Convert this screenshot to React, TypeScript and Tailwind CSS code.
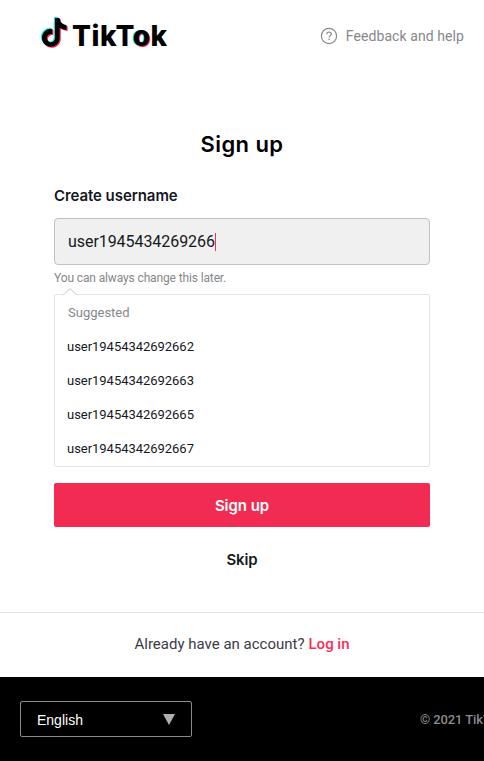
const NOTE =
  "M12.525.02c1.31-.02 2.61-.01 3.91-.02.08 1.53.63 3.09 1.75 4.17 1.12 1.11 2.7 1.62 4.24 1.79v4.03c-1.44-.05-2.89-.35-4.2-.97-.57-.26-1.1-.59-1.62-.93-.01 2.92.01 5.84-.02 8.75-.08 1.4-.54 2.79-1.35 3.94-1.31 1.92-3.58 3.17-5.91 3.21-1.43.08-2.86-.31-4.08-1.03-2.02-1.19-3.44-3.37-3.65-5.71-.02-.5-.03-1-.01-1.49.18-1.9 1.12-3.72 2.58-4.96 1.66-1.44 3.98-2.13 6.15-1.72.02 1.48-.04 2.96-.04 4.44-.99-.32-2.15-.23-3.02.37-.63.41-1.11 1.04-1.36 1.75-.21.51-.15 1.07-.14 1.61.24 1.64 1.82 3.02 3.5 2.87 1.12-.01 2.19-.66 2.77-1.61.19-.33.4-.67.41-1.06.1-1.79.06-3.57.07-5.36.01-4.03-.01-8.05.02-12.07z";

const suggestions = [
  "user19454342692662",
  "user19454342692663",
  "user19454342692665",
  "user19454342692667",
];

function Logo() {
  return (
    <div className="flex items-start">
      <svg width="28" height="32" viewBox="0 0 28 32">
        <path d={NOTE} fill="#25f4ee" transform="translate(-1 1.1) scale(1.18 1.2)" />
        <path d={NOTE} fill="#fe2c55" transform="translate(1.2 3) scale(1.18 1.2)" />
        <path d={NOTE} fill="#000" transform="translate(0.1 2) scale(1.18 1.2)" />
      </svg>
      <span className="ml-1 mt-[3px] whitespace-nowrap font-['Inter',sans-serif] text-[28px] font-extrabold leading-[34px] tracking-[0.5px] text-black">
        TikT
        <span className="[text-shadow:-1.2px_-0.5px_0_#25f4ee,1.2px_0.8px_0_#fe2c55]">o</span>k
      </span>
    </div>
  );
}

function HelpIcon() {
  return (
    <svg width="18" height="18" viewBox="0 0 18 18" fill="none" stroke="#86878b" strokeWidth="1.2">
      <circle cx="9" cy="9" r="7.6" />
      <path d="M6.7 7.2c0-1.3 1-2.2 2.3-2.2s2.3.9 2.3 2.1c0 1.6-2.2 1.7-2.2 3.5" />
      <path d="M9.1 11.6v1.5" />
    </svg>
  );
}

export default function App() {
  return (
    <div className="flex h-[761px] w-[484px] flex-col overflow-hidden bg-white font-['Roboto',sans-serif] text-[#161823]">
      <header className="flex h-[130px] shrink-0 items-start justify-between pl-10 pr-5 pt-4">
        <Logo />
        <a className="mt-[10px] flex items-center gap-2 text-[#86878b]">
          <HelpIcon />
          <span className="mt-px whitespace-nowrap text-sm leading-[18px] tracking-[0.08px]">Feedback and help</span>
        </a>
      </header>

      <main className="flex h-[482px] shrink-0 flex-col px-[54px]">
        <h1 className="text-center font-['Inter',sans-serif] text-[22px] font-semibold leading-7 tracking-[0.4px] text-black">Sign up</h1>
        <label className="mt-[28px] font-['Inter',sans-serif] text-[15px] font-semibold leading-5 tracking-[-0.07px]">Create username</label>
        <div className="mt-3 flex h-[47px] items-center rounded-[4px] border border-[#c2c2c4] bg-[#f0f0f0] pl-[13px]">
          <span className="text-base leading-5 tracking-[-0.06px]">user1945434269266</span>
          <span className="h-[18px] w-px bg-[#fe2c55]" />
        </div>
        <p className="mt-[5px] text-xs leading-4 tracking-[-0.13px] text-[#86878b]">You can always change this later.</p>
        <div className="relative mt-2 flex h-[173px] flex-col rounded-[2px] border border-[#e3e3e4] pl-[13px] pt-px">
          <svg className="absolute -top-[7px] left-[8px]" width="14" height="8" viewBox="0 0 14 8">
            <path d="M0 7.5L7 .7l7 6.8V8H0z" fill="#fff" />
            <path d="M0 6.8L7 .7l7 6.1" fill="none" stroke="#dcdcde" strokeWidth="1.2" />
          </svg>
          <span className="text-[13px] leading-[34px] text-[#86878b]">Suggested</span>
          {suggestions.map((name) => (
            <span key={name} className="-ml-px text-[13px] leading-[34px] tracking-[-0.03px]">{name}</span>
          ))}
        </div>
        <button className="mt-4 h-11 rounded-[2px] bg-[#f12b51] pt-0.5 font-['Inter',sans-serif] text-[15px] font-semibold tracking-[-0.05px] text-white">Sign up</button>
        <button className="mt-[23px] font-['Inter',sans-serif] text-[15px] font-semibold leading-5 tracking-[-0.1px]">Skip</button>
      </main>

      <section className="flex h-[65px] shrink-0 items-center justify-center gap-1 border-t border-[#e3e3e4] pb-0.5 text-[15px] text-[#3a3b44]">
        <span>Already have an account?</span>
        <a className="font-medium text-[#fe2c55]">Log in</a>
      </section>

      <footer className="flex h-[84px] shrink-0 items-center bg-black pl-5">
        <div className="flex h-9 w-[172px] shrink-0 items-center justify-between rounded-[2px] border border-[#8a8b91] pl-4 pr-4">
          <span className="pt-0.5 font-['Liberation_Sans',sans-serif] text-sm text-white">English</span>
          <svg width="12" height="11" viewBox="0 0 12 11">
            <path d="M0 0h12L6 11z" fill="#b0b0b4" />
          </svg>
        </div>
        <span className="ml-[228px] mt-0.5 whitespace-nowrap text-[13px] font-medium tracking-[-0.1px] text-[#8a8b91]">© 2021 TikTok</span>
      </footer>
    </div>
  );
}
